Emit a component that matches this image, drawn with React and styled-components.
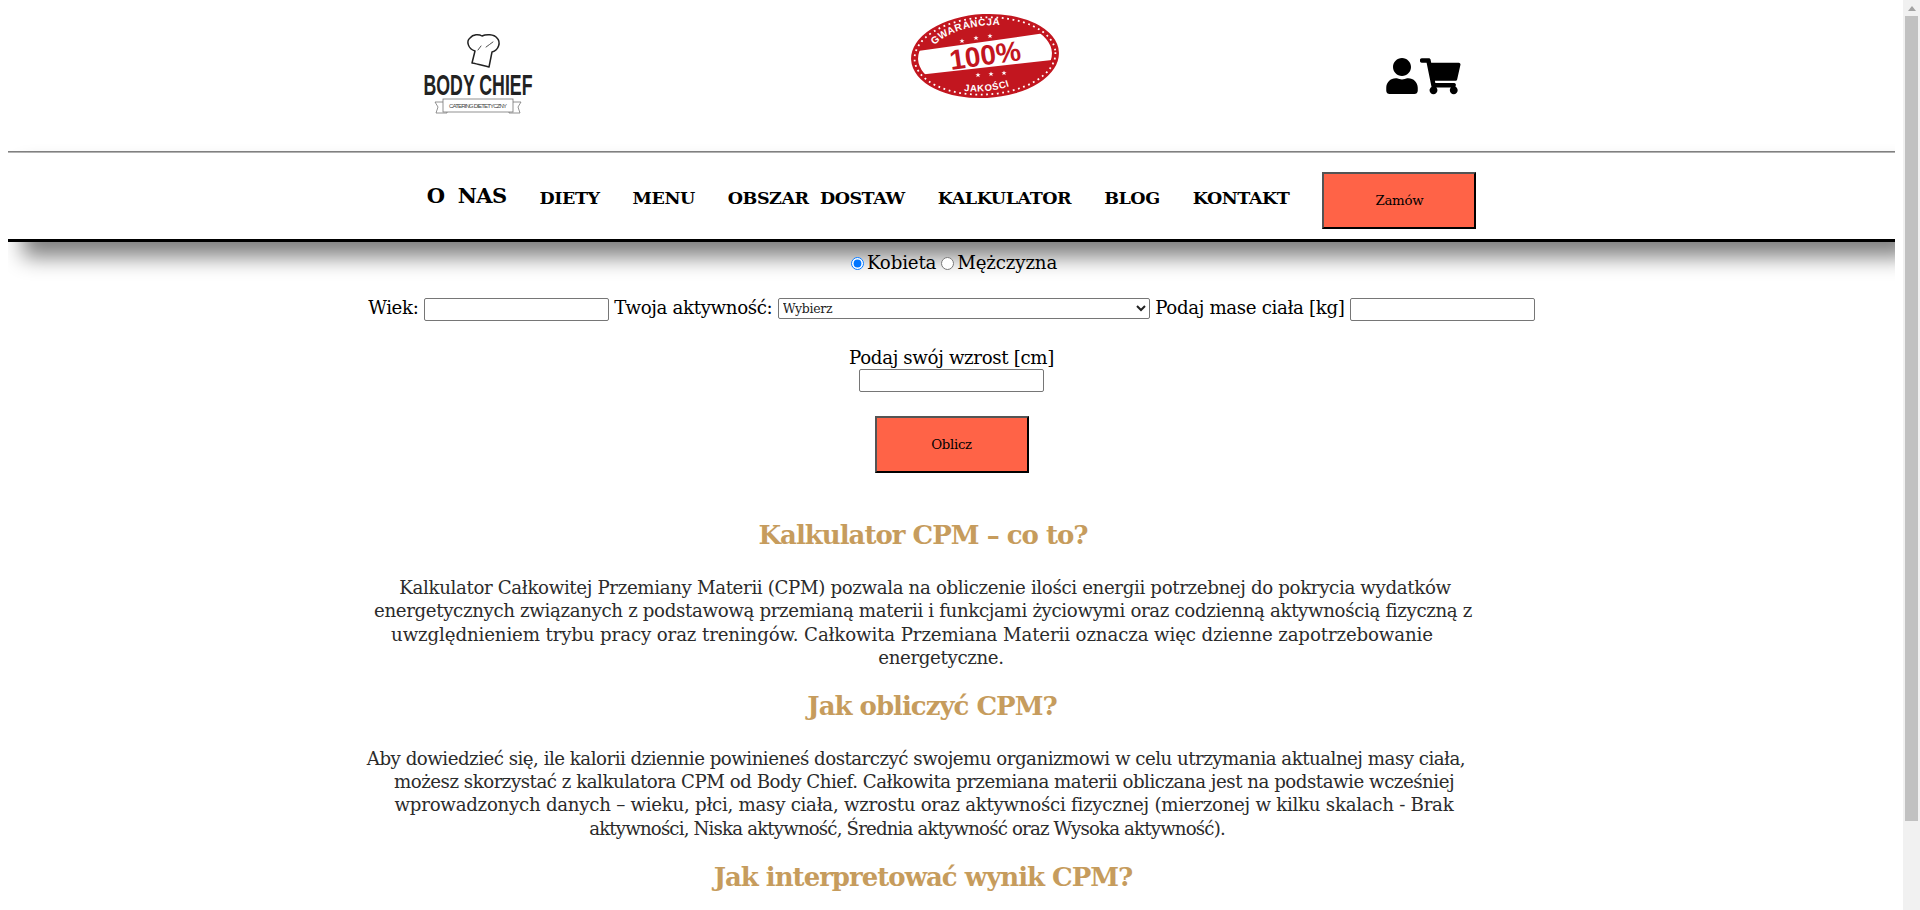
import React from 'react';
import styled, { createGlobalStyle } from 'styled-components';
import { FaUser, FaShoppingCart } from 'react-icons/fa';

const serif = '"DejaVu Serif", "Liberation Serif", serif';

const GlobalStyle = createGlobalStyle`
  body {
    margin: 8px 25px 8px 8px;
    background: #fff;
    color: #000;
    font-family: ${serif};
  }
`;

const Page = styled.div`
  padding-bottom: 90px;
`;

// the browser hides its own scrollbar, so this one is drawn over the page
const ScrollTrack = styled.div`
  position: fixed;
  z-index: 5;
  top: 0;
  right: 0;
  bottom: 0;
  width: 17px;
  background: #f1f1f1;
`;

const ScrollArrow = styled.div`
  width: 0;
  height: 0;
  margin: 6px auto 5px;
  border-left: 4px solid transparent;
  border-right: 4px solid transparent;
  border-bottom: 5px solid #a3a3a3;
`;

const ScrollThumb = styled.div`
  height: 805px;
  margin: 1px 2px 0;
  background: #c1c1c1;
`;

const TopBar = styled.header`
  display: flex;
  align-items: flex-start;
  height: 143px;
  padding-left: 408px;
`;

const LogoSvg = styled.svg`
  display: block;
  width: 124px;
  height: 90px;
  margin-top: 23px;
  overflow: visible;
`;

const StampSvg = styled.svg`
  display: block;
  width: 150px;
  height: 88px;
  margin-top: 4px;
  margin-left: 370px;
`;

const Icons = styled.div`
  display: flex;
  align-items: center;
  margin-top: 48px;
  margin-left: 324px;
  line-height: 0;
`;

const UserIcon = styled(FaUser)`
  font-size: 36px;
`;

const CartIcon = styled(FaShoppingCart)`
  font-size: 40.5px;
`;

const Rule = styled.hr`
  margin: 0;
  border: 0;
  border-top: 1px solid #808080;
  border-bottom: 1px solid #b5b5b5;
`;

const Nav = styled.nav`
  display: flex;
  align-items: center;
  justify-content: center;
  gap: 33px;
  height: 78px;
  padding-top: 8px;
  background: #fff;
  border-bottom: 3px solid #000;
  box-shadow: 15px 15px 20px gray;
`;

const NavLink = styled.a`
  font-size: ${(p) => (p.$big ? '21px' : '17.5px')};
  font-weight: 700;
  white-space: pre;
  color: #000;
  letter-spacing: ${(p) => (p.$big ? '-0.6px' : '-0.45px')};
  margin-top: ${(p) => (p.$big ? '-9px' : '-4px')};
`;

const ActionButton = styled.button`
  width: 154px;
  height: 57px;
  padding: 0;
  background: #ff6347;
  border: 2px outset #000;
  color: #000;
  font-family: ${serif};
  font-size: 13.33px;
  letter-spacing: -0.3px;
`;

const Form = styled.form`
  padding-top: 9px;
  text-align: center;
  font-size: 18.2px;
  letter-spacing: -0.35px;
  color: #000;
`;

const RadioRow = styled.div`
  height: 24px;
  line-height: 24px;
  letter-spacing: -0.15px;
`;

const Radio = styled.input.attrs({ type: 'radio' })`
  margin: 0 3px 0 5px;
  vertical-align: -1px;
`;

const FieldRow = styled.div`
  margin-top: ${(p) => p.$top};
  line-height: 24px;
`;

const FieldLabel = styled.label`
  display: block;
  line-height: 19px;
`;

const TextField = styled.input.attrs({ type: 'text' })`
  box-sizing: border-box;
  display: inline-block;
  width: 185px;
  height: 23px;
  padding: 1px 2px;
  margin: 0;
  vertical-align: 0;
  border: 1px solid #767676;
  border-radius: 2px;
  background: #fff;
`;

const Select = styled.select`
  box-sizing: border-box;
  width: 372px;
  height: 21px;
  margin: 0;
  vertical-align: 1px;
  border: 1px solid #767676;
  border-radius: 2px;
  background: #fff;
  color: #222;
  font-family: ${serif};
  font-size: 12.5px;
  letter-spacing: -0.3px;
`;

const SubmitRow = styled.div`
  display: flex;
  justify-content: center;
  margin-top: 24px;
`;

const Article = styled.article`
  width: 1160px;
  margin: 0 0 0 335px;
  text-align: center;
  color: #2b2b2b;
`;

const Heading = styled.h2`
  margin: ${(p) => p.$top} 0 0 ${(p) => (p.$shift || 0) * 2}px;
  font-size: 26px;
  line-height: 36px;
  font-weight: 700;
  letter-spacing: -1px;
  color: #c69c5d;
`;

const Paragraph = styled.p`
  margin: 23px 0 0;
  font-size: 18.2px;
  line-height: 23.4px;
`;

const Line = styled.span`
  display: block;
  white-space: nowrap;
  letter-spacing: ${(p) => p.$track ?? -0.35}px;
  margin-left: ${(p) => (p.$shift || 0) * 2}px;
`;

const Logo = () => (
  <LogoSvg viewBox="0 0 124 90">
    <g fill="none" stroke="#222" strokeWidth="1.5" strokeLinecap="round" strokeLinejoin="round">
      <path d="M59 20 C52 18 50 10 54 7 C57 3 63 3 66 5 C70 3 78 3 81 7 C85 11 83 19 76 21 L73 36 C68 35 62 33 56 32 L59 20 Z" />
      <path d="M62 19 L65 15 M70 16 C72 14 75 13 77 11" strokeWidth="0.8" />
    </g>
    <text
      x="62"
      y="64"
      textAnchor="middle"
      textLength="109"
      lengthAdjust="spacingAndGlyphs"
      fontFamily='"Liberation Sans Narrow", "Liberation Sans", sans-serif'
      fontSize="30"
      fontWeight="700"
      fill="#222"
    >
      BODY CHIEF
    </text>
    <g fill="none" stroke="#777" strokeWidth="0.8">
      <rect x="27" y="68" width="70" height="13" />
      <path d="M27 71 L19 71 L22 76 L20 82 L31 82 L31 81" />
      <path d="M97 71 L105 71 L102 76 L104 82 L93 82 L93 81" />
    </g>
    <text
      x="62"
      y="77"
      textAnchor="middle"
      textLength="58"
      lengthAdjust="spacing"
      fontFamily='"Liberation Sans Narrow", "Liberation Sans", sans-serif'
      fontSize="6"
      fill="#444"
    >
      CATERING DIETETYCZNY
    </text>
  </LogoSvg>
);

const Star = ({ x, y }) => (
  <polygon
    transform={`translate(${x} ${y})`}
    points="0,-2.6 0.7,-0.8 2.6,-0.8 1.1,0.3 1.6,2.2 0,1.1 -1.6,2.2 -1.1,0.3 -2.6,-0.8 -0.7,-0.8"
    fill="#fff"
  />
);

const Stamp = () => (
  <StampSvg viewBox="0 0 150 88">
    <defs>
      <clipPath id="stamp-inner">
        <ellipse cx="75" cy="44" rx="67" ry="36" transform="rotate(-3 75 44)" />
      </clipPath>
      <path id="arc-top" d="M24 33 Q 52 9 102 14" />
      <path id="arc-bottom" d="M54 79 Q 90 82 118 66" />
    </defs>
    <ellipse cx="75" cy="44" rx="74" ry="42" transform="rotate(-3 75 44)" fill="#c2161f" />
    <ellipse
      cx="75"
      cy="44"
      rx="70.5"
      ry="38.5"
      transform="rotate(-3 75 44)"
      fill="none"
      stroke="#fff"
      strokeWidth="1.8"
      strokeDasharray="1.8 3.6"
    />
    <g clipPath="url(#stamp-inner)">
      <polygon points="0,40 150,19 150,47 0,64" fill="#fff" />
    </g>
    <text fontFamily='"Liberation Sans", sans-serif' fontSize="10" fontWeight="700" fill="#fff" letterSpacing="0.6">
      <textPath href="#arc-top">GWARANCJA</textPath>
    </text>
    <text fontFamily='"Liberation Sans", sans-serif' fontSize="9.5" fontWeight="700" fill="#fff" letterSpacing="0.6">
      <textPath href="#arc-bottom">JAKOŚCI</textPath>
    </text>
    <text
      x="75"
      y="53"
      textAnchor="middle"
      fontFamily='"Liberation Sans", sans-serif'
      fontSize="28"
      fontWeight="700"
      fill="#c2161f"
      transform="rotate(-8 75 43)"
    >
      100%
    </text>
    <Star x={66} y={26} />
    <Star x={52} y={29} />
    <Star x={80} y={24} />
    <Star x={81} y={62} />
    <Star x={68} y={63} />
    <Star x={94} y={61} />
  </StampSvg>
);

const links = ['DIETY', 'MENU', 'OBSZAR  DOSTAW', 'KALKULATOR', 'BLOG', 'KONTAKT'];

const App = () => (
  <Page>
    <GlobalStyle />
    <ScrollTrack aria-hidden="true">
      <ScrollArrow />
      <ScrollThumb />
    </ScrollTrack>
    <TopBar>
      <Logo />
      <Stamp />
      <Icons>
        <UserIcon />
        <CartIcon />
      </Icons>
    </TopBar>
    <Rule />
    <Nav>
      <NavLink $big>O  NAS</NavLink>
      {links.map((link) => (
        <NavLink key={link}>{link}</NavLink>
      ))}
      <ActionButton type="button">Zamów</ActionButton>
    </Nav>
    <Form>
      <RadioRow>
        <Radio name="sex" defaultChecked />Kobieta
        <Radio name="sex" />Mężczyzna
      </RadioRow>
      <FieldRow $top="21px">
        Wiek: <TextField /> Twoja aktywność:{' '}
        <Select defaultValue="none">
          <option value="none">Wybierz</option>
        </Select>{' '}
        Podaj mase ciała [kg] <TextField />
      </FieldRow>
      <FieldRow $top="27px">
        <FieldLabel>Podaj swój wzrost [cm]</FieldLabel>
        <TextField />
      </FieldRow>
      <SubmitRow>
        <ActionButton type="button">Oblicz</ActionButton>
      </SubmitRow>
    </Form>
    <Article>
      <Heading $top="44px">Kalkulator CPM – co to?</Heading>
      <Paragraph>
        <Line $shift={2}>Kalkulator Całkowitej Przemiany Materii (CPM) pozwala na obliczenie ilości energii potrzebnej do pokrycia wydatków</Line>
        <Line>energetycznych związanych z podstawową przemianą materii i funkcjami życiowymi oraz codzienną aktywnością fizyczną z</Line>
        <Line $shift={-11} $track={-0.13}>uwzględnieniem trybu pracy oraz treningów. Całkowita Przemiana Materii oznacza więc dzienne zapotrzebowanie</Line>
        <Line $shift={18}>energetyczne.</Line>
      </Paragraph>
      <Heading $top="18px" $shift={9}>Jak obliczyć CPM?</Heading>
      <Paragraph>
        <Line $shift={-7} $track={-0.5}>Aby dowiedzieć się, ile kalorii dziennie powinieneś dostarczyć swojemu organizmowi w celu utrzymania aktualnej masy ciała,</Line>
        <Line $shift={1} $track={-0.48}>możesz skorzystać z kalkulatora CPM od Body Chief. Całkowita przemiana materii obliczana jest na podstawie wcześniej</Line>
        <Line $shift={1} $track={-0.27}>wprowadzonych danych – wieku, płci, masy ciała, wzrostu oraz aktywności fizycznej (mierzonej w kilku skalach - Brak</Line>
        <Line $shift={-16} $track={-0.85}>aktywności, Niska aktywność, Średnia aktywność oraz Wysoka aktywność).</Line>
      </Paragraph>
      <Heading $top="19px">Jak interpretować wynik CPM?</Heading>
    </Article>
  </Page>
);

export default App;
